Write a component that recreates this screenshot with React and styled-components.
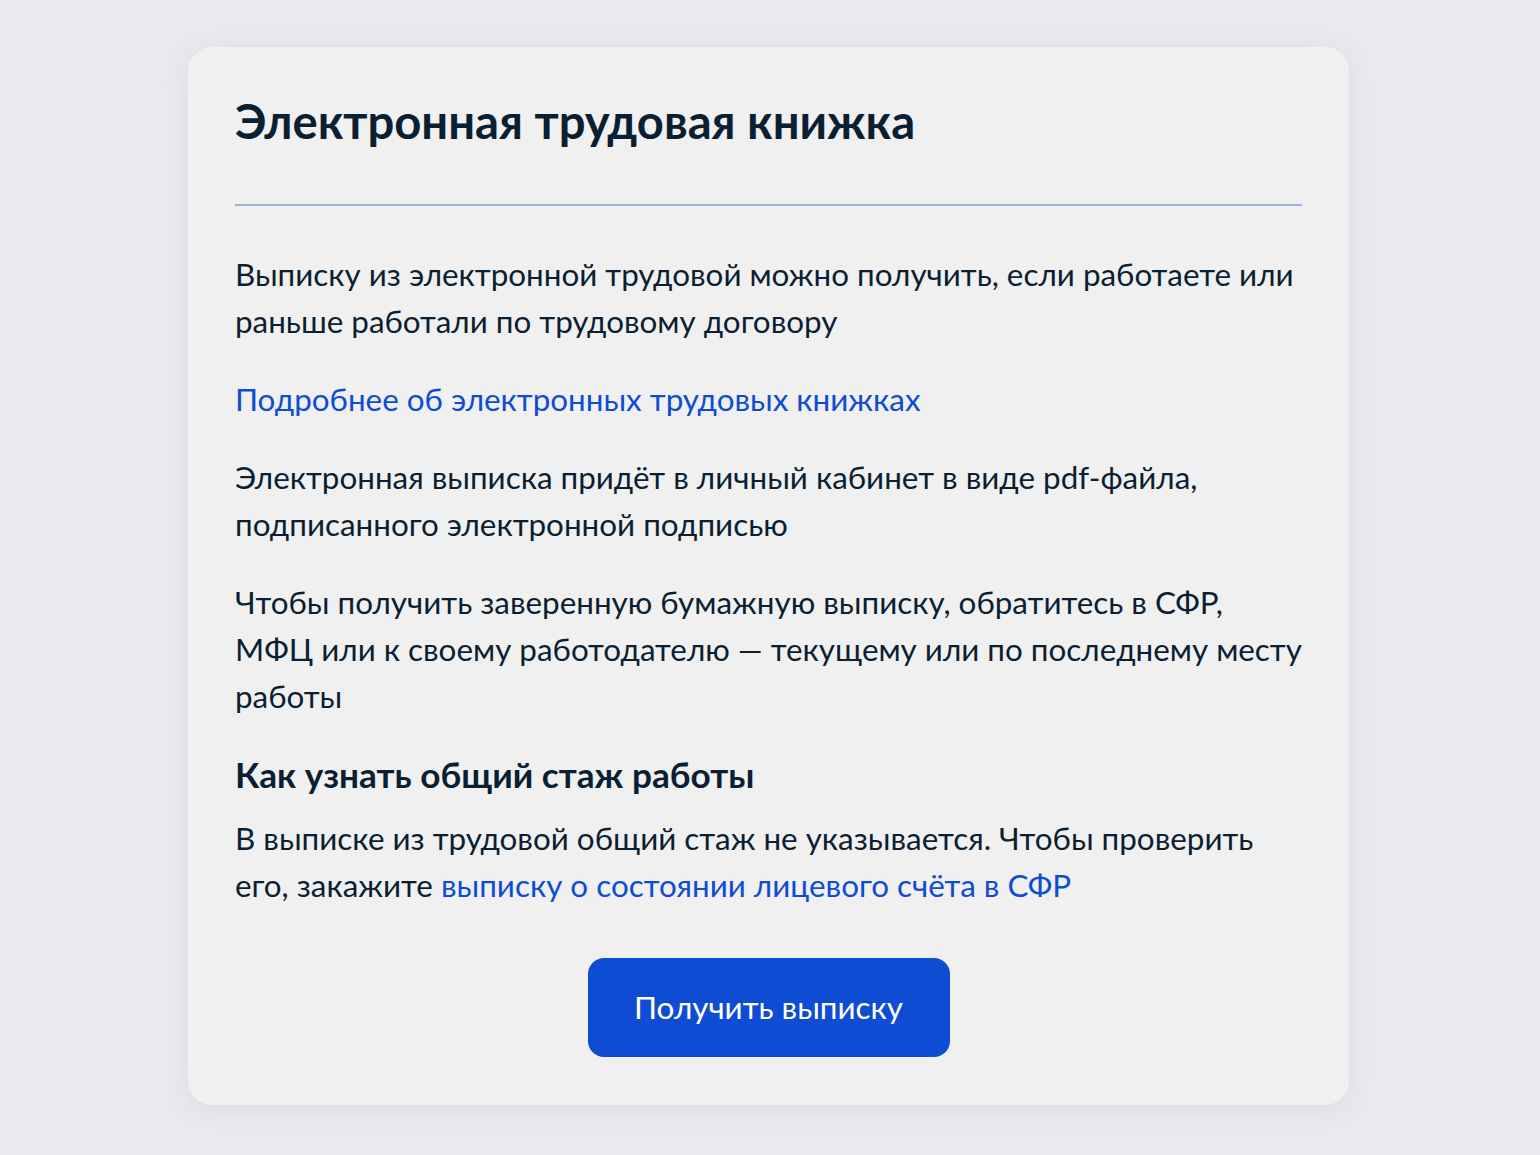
import React from 'react'
import styled, { createGlobalStyle } from 'styled-components'

const GlobalStyle = createGlobalStyle`
  html, body {
    margin: 0;
    padding: 0;
    background: #e9eaee;
  }
  body {
    font-family: Lato, 'Noto Sans', sans-serif;
    color: #0b1f33;
  }
`

const Page = styled.div`
  min-height: 1155px;
  padding: 47px 3px 48px 0;
  box-sizing: border-box;
  display: flex;
  justify-content: center;
  align-items: flex-start;
`

const Card = styled.section`
  width: 1161px;
  box-sizing: border-box;
  padding: 46px 47px 48px;
  background: #f0f0f0;
  border-radius: 24px;
  box-shadow: 0 4px 24px rgba(170, 180, 205, 0.25);
`

const Title = styled.h1`
  margin: 0;
  font-size: 47.2px;
  line-height: 56px;
  font-weight: 700;
`

const Divider = styled.hr`
  margin: 55px 0 45px;
  border: 0;
  height: 2px;
  background: #a0b3e4;
`

const Paragraph = styled.p`
  margin: 0 0 ${p => (p.$tight ? 0 : 31)}px;
  font-size: 31.4px;
  line-height: 47px;
`

const Link = styled.a`
  color: #0d4cd3;
  text-decoration: none;
  cursor: pointer;
`

const Subtitle = styled.h2`
  margin: 32px 0 17px;
  font-size: 35.2px;
  line-height: 47px;
  font-weight: 700;

  p + & {
    margin-top: 2px;
  }
`

const Actions = styled.div`
  display: flex;
  justify-content: center;
  margin-top: 49px;
`

const Button = styled.button`
  width: 362px;
  height: 99px;
  border: 0;
  border-radius: 16px;
  background: #0d4cd3;
  color: #fff;
  font-family: Lato, 'Noto Sans', sans-serif;
  font-size: 31.4px;
  line-height: 47px;
  cursor: pointer;
`

export default function App() {
  return (
    <>
      <GlobalStyle />
      <Page>
        <Card>
          <Title>Электронная трудовая книжка</Title>
          <Divider />
          <Paragraph>
            Выписку из электронной трудовой можно получить, если работаете или
            раньше работали по трудовому договору
          </Paragraph>
          <Paragraph>
            <Link>Подробнее об электронных трудовых книжках</Link>
          </Paragraph>
          <Paragraph>
            Электронная выписка придёт в личный кабинет в виде pdf-файла,
            подписанного электронной подписью
          </Paragraph>
          <Paragraph>
            Чтобы получить заверенную бумажную выписку, обратитесь в СФР, МФЦ
            или к своему работодателю — текущему или по последнему месту работы
          </Paragraph>
          <Subtitle>Как узнать общий стаж работы</Subtitle>
          <Paragraph $tight>
            В выписке из трудовой общий стаж не указывается. Чтобы проверить
            его, закажите <Link>выписку о состоянии лицевого счёта в СФР</Link>
          </Paragraph>
          <Actions>
            <Button>Получить выписку</Button>
          </Actions>
        </Card>
      </Page>
    </>
  )
}
